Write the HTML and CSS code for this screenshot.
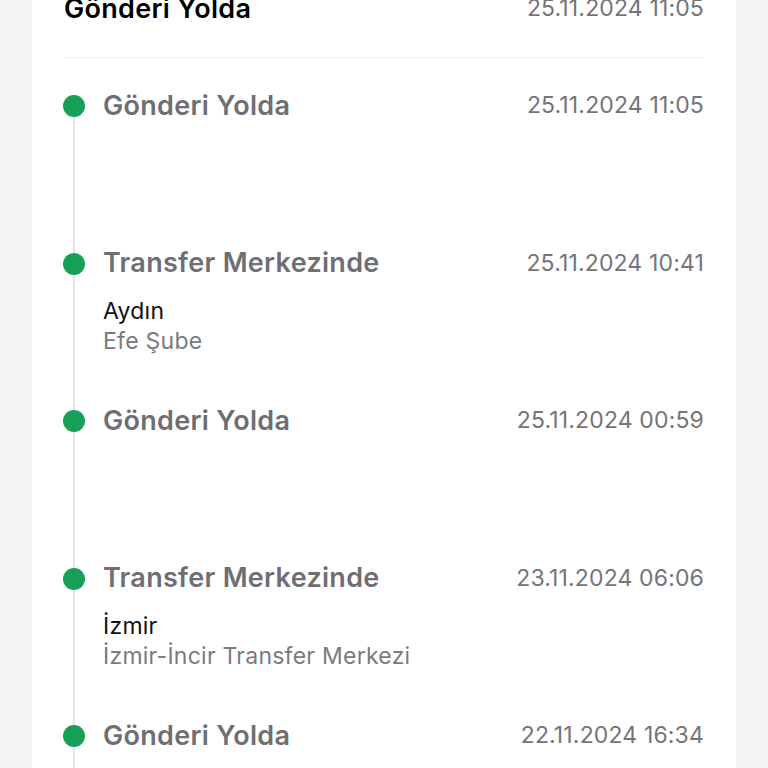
FILE: index.html
```
<!DOCTYPE html>
<html lang="tr">
<head>
    <meta charset="UTF-8">
    <meta name="viewport" content="width=device-width, initial-scale=1.0">
    <title>Gönderi Takibi</title>
    <link rel="stylesheet" href="styles.css">
</head>
<body>
    <div class="card">
        <div class="status-header">
            <h2>Gönderi Yolda</h2>
            <span class="date">25.11.2024 11:05</span>
        </div>

        <ul class="timeline">
            <li class="event">
                <span class="dot"></span>
                <div class="event-top">
                    <span class="event-title">Gönderi Yolda</span>
                    <span class="date">25.11.2024 11:05</span>
                </div>
            </li>
            <li class="event">
                <span class="dot"></span>
                <div class="event-top">
                    <span class="event-title">Transfer Merkezinde</span>
                    <span class="date">25.11.2024 10:41</span>
                </div>
                <div class="place">
                    <div class="city">Aydın</div>
                    <div class="branch">Efe Şube</div>
                </div>
            </li>
            <li class="event">
                <span class="dot"></span>
                <div class="event-top">
                    <span class="event-title">Gönderi Yolda</span>
                    <span class="date">25.11.2024 00:59</span>
                </div>
            </li>
            <li class="event">
                <span class="dot"></span>
                <div class="event-top">
                    <span class="event-title">Transfer Merkezinde</span>
                    <span class="date">23.11.2024 06:06</span>
                </div>
                <div class="place">
                    <div class="city">İzmir</div>
                    <div class="branch">İzmir-İncir Transfer Merkezi</div>
                </div>
            </li>
            <li class="event">
                <span class="dot"></span>
                <div class="event-top">
                    <span class="event-title">Gönderi Yolda</span>
                    <span class="date">22.11.2024 16:34</span>
                </div>
            </li>
        </ul>
    </div>
</body>
</html>
```

FILE: styles.css
```
:root {
    --page-bg: #f3f3f5;
    --card-bg: #ffffff;
    --title-gray: #6e6e73;
    --date-gray: #747479;
    --line-color: #e4e4e7;
    --green: #17a058;
}

body {
    font-family: 'Inter', 'Noto Sans', sans-serif;
    background-color: var(--page-bg);
    margin: 0;
    overflow: hidden;
}

.card {
    background-color: var(--card-bg);
    margin: -12px 32px 0;
    padding: 0 32px 40px;
    min-height: 820px;
}

.status-header {
    display: flex;
    justify-content: space-between;
    align-items: center;
    height: 40px;
    padding-bottom: 29px;
    border-bottom: 1px solid #efeff1;
}

.status-header h2 {
    margin: 0;
    font-size: 27px;
    font-weight: 600;
    letter-spacing: 0.3px;
    color: #000;
}

.date {
    font-size: 23px;
    color: var(--date-gray);
    letter-spacing: 0.15px;
}

.timeline {
    list-style: none;
    margin: 0;
    padding: 31px 0 0;
    position: relative;
}

.timeline::before {
    content: "";
    position: absolute;
    left: 9px;
    top: 47px;
    bottom: 0;
    width: 2px;
    background-color: var(--line-color);
}

.event {
    display: grid;
    grid-template-columns: 20px 1fr;
    column-gap: 19px;
    align-content: start;
    height: 157.5px;
    position: relative;
}

.dot {
    width: 22px;
    height: 22px;
    border-radius: 50%;
    background-color: var(--green);
    margin: 6px 0 0 -1px;
    grid-row: 1;
    position: relative;
}

.event-top {
    display: flex;
    justify-content: space-between;
    align-items: center;
    height: 32px;
}

.event-title {
    font-size: 27px;
    font-weight: 600;
    letter-spacing: 0.3px;
    color: var(--title-gray);
}

.place {
    grid-column: 2;
    margin-top: 17px;
    font-size: 23px;
    letter-spacing: 0.25px;
    line-height: 30px;
}

.city {
    color: #111;
}

.branch {
    color: #7a7a7f;
}
```
